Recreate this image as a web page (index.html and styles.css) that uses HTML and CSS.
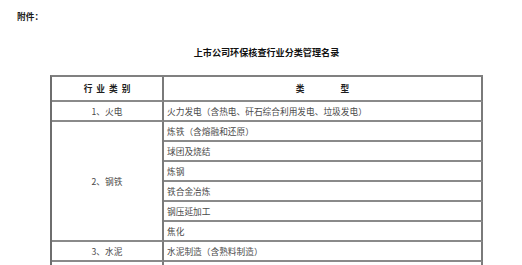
FILE: index.html
```html
<!DOCTYPE html>
<html lang="zh-CN">
<head>
<meta charset="utf-8">
<link rel="stylesheet" href="styles.css">
</head>
<body>
<div class="page">
  <div class="attach">附件：</div>
  <div class="title">上市公司环保核查行业分类管理名录</div>
  <div class="grid">
    <div class="cell head c1"><span class="spaced">行业类别</span></div>
    <div class="cell head c2"><span>类</span><span>型</span></div>

    <div class="cell c1 center">1、火电</div>
    <div class="cell c2">火力发电（含热电、矸石综合利用发电、垃圾发电）</div>

    <div class="cell c1 center span6">2、钢铁</div>
    <div class="cell c2">炼铁（含熔融和还原）</div>
    <div class="cell c2">球团及烧结</div>
    <div class="cell c2">炼钢</div>
    <div class="cell c2">铁合金冶炼</div>
    <div class="cell c2">钢压延加工</div>
    <div class="cell c2">焦化</div>

    <div class="cell c1 center">3、水泥</div>
    <div class="cell c2">水泥制造（含熟料制造）</div>

    <div class="cell c1 center"></div>
    <div class="cell c2"></div>
  </div>
</div>
</body>
</html>
```

FILE: styles.css
```css
html, body {
  margin: 0;
  padding: 0;
  background: #ffffff;
  height: 265px;
  overflow: hidden;
}

.page {
  font-family: "Noto Sans CJK SC", "Noto Sans", sans-serif;
  color: #222;
}

.attach {
  padding-top: 10px;
  padding-left: 17px;
  font-size: 8.7px;
  line-height: 13px;
  font-weight: 700;
  color: #1a1a1a;
}

.title {
  margin-top: 22px;
  margin-left: 50px;
  width: 433px;
  text-align: center;
  font-size: 9.1px;
  line-height: 14px;
  font-weight: 700;
  color: #111;
}

.grid {
  margin-top: 16px;
  margin-left: 50px;
  width: 433px;
  box-sizing: border-box;
  display: grid;
  grid-template-columns: 112px 319px;
  grid-auto-rows: 20px;
  grid-template-rows: 25px;
  border-top: 2px solid #808080;
  border-left: 2px solid #6e6e6e;
}

.cell {
  box-sizing: border-box;
  border-right: 2px solid #7a7a7a;
  border-bottom: 2px solid #8a8a8a;
  display: flex;
  align-items: center;
  font-size: 8.7px;
  line-height: 10px;
  color: #4a4a4a;
  font-weight: 400;
  padding-top: 1px;
}

.c2 {
  padding-left: 3px;
}

.center {
  justify-content: center;
}

.span6 {
  grid-row: span 6;
}

.head {
  justify-content: center;
  font-weight: 700;
  color: #1e1e1e;
}

.head.c2 {
  gap: 36px;
  padding-left: 0;
}

.spaced {
  letter-spacing: 4px;
  padding-left: 4px;
}
```
